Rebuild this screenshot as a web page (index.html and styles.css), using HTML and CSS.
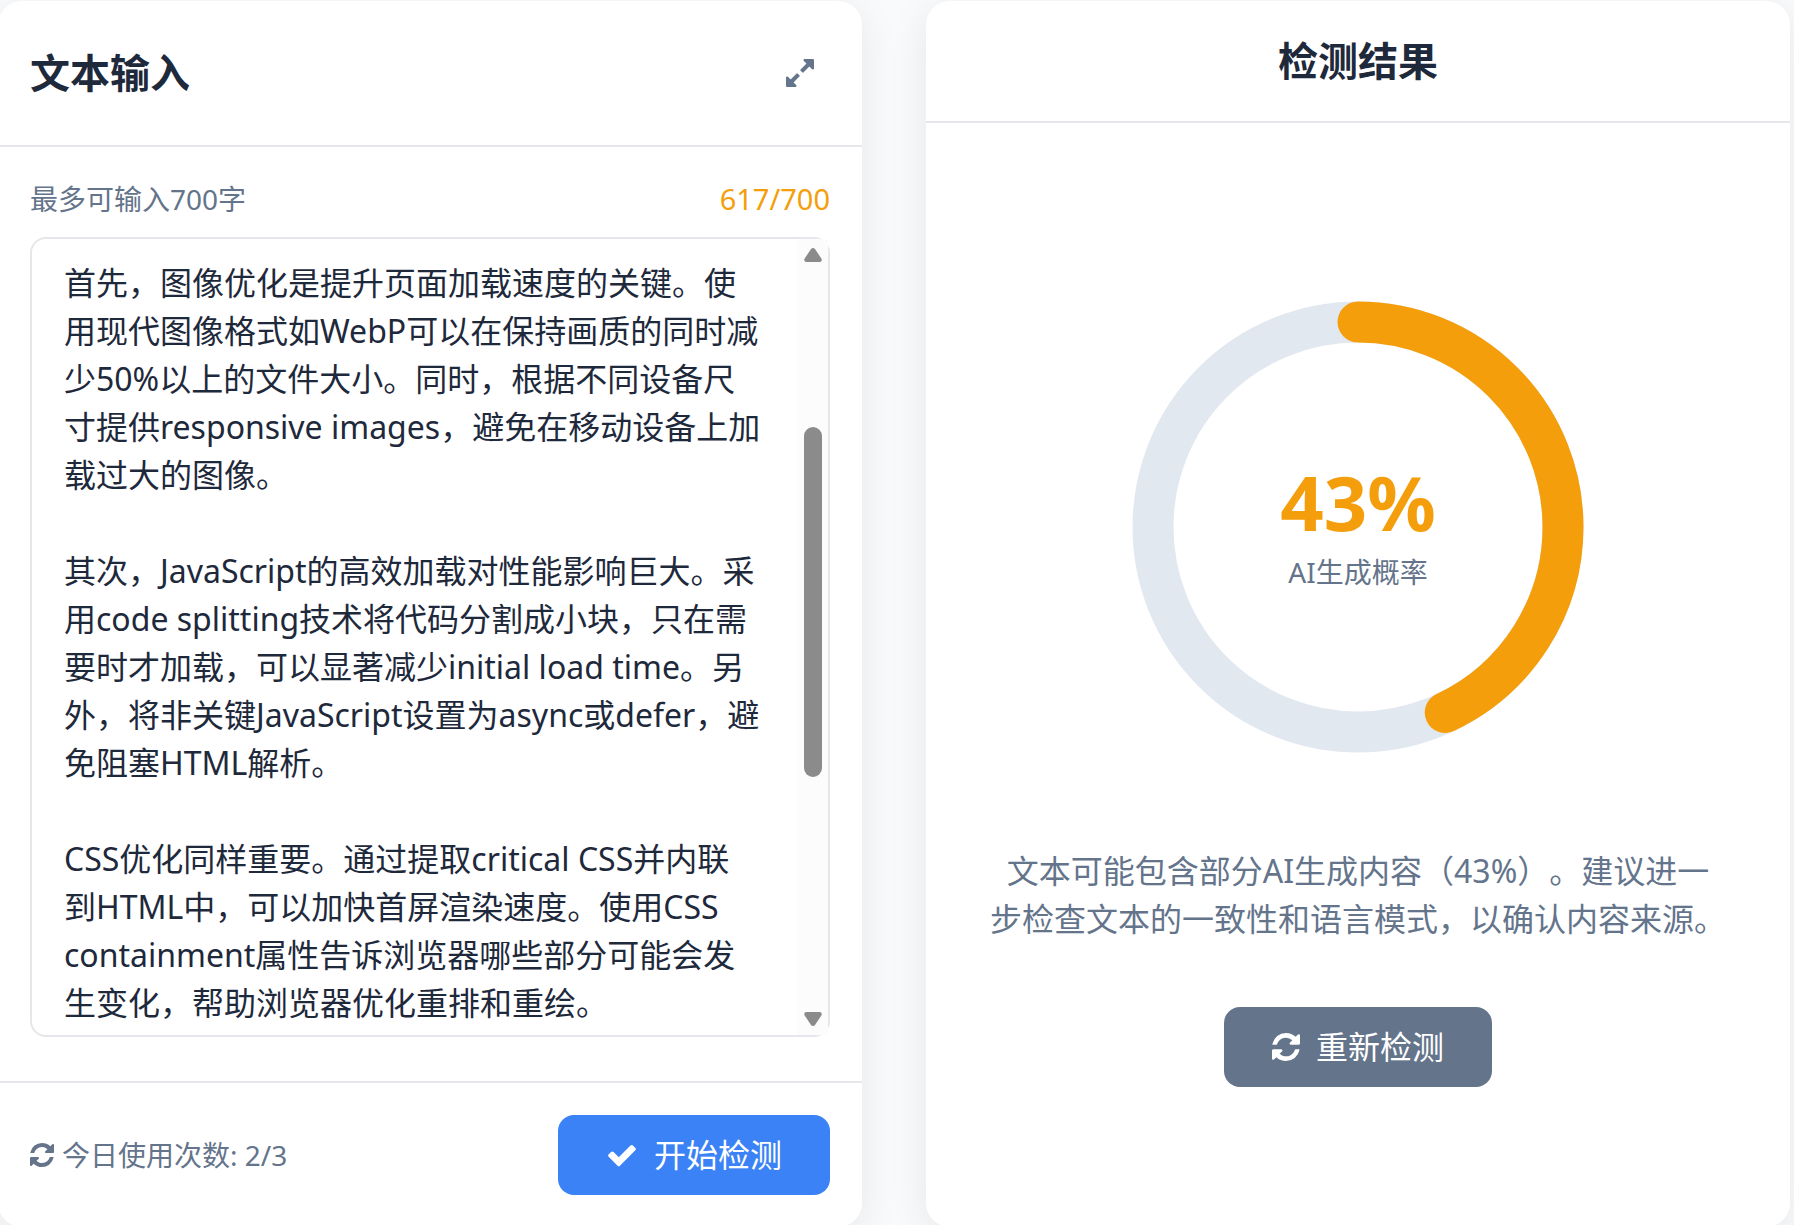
FILE: index.html
```
<!DOCTYPE html>
<html lang="zh-CN">
<head>
    <meta charset="UTF-8">
    <title>AI文本检测</title>
    <link rel="stylesheet" href="styles.css">
</head>
<body>
<svg class="sprite" aria-hidden="true">
    <symbol id="icon-refresh" viewBox="128 128 1536 1536">
        <path d="M1639 1056q0 5-1 7-64 268-268 434.500t-478 166.500q-146 0-282.500-55t-243.500-157l-129 129q-19 19-45 19t-45-19-19-45v-448q0-26 19-45t45-19h448q26 0 45 19t19 45-19 45l-137 137q71 66 161 102t187 36q134 0 250-65t186-179q11-17 53-117 8-23 30-23h192q13 0 22.500 9.500t9.500 22.500zm25-800v448q0 26-19 45t-45 19h-448q-26 0-45-19t-19-45 19-45l138-138q-148-137-349-137-134 0-250 65t-186 179q-11 17-53 117-8 23-30 23h-199q-13 0-22.500-9.500t-9.500-22.500v-7q65-268 270-434.500t480-166.500q146 0 284 55.500t245 156.500l130-129q19-19 45-19t45 19 19 45z"/>
    </symbol>
    <symbol id="icon-check" viewBox="0 0 1792 1792">
        <path d="M1671 566q0 40-28 68l-724 724-136 136q-28 28-68 28t-68-28l-136-136-362-362q-28-28-28-68t28-68l136-136q28-28 68-28t68 28l294 295 656-657q28-28 68-28t68 28l136 136q28 28 28 68z"/>
    </symbol>
    <symbol id="icon-expand" viewBox="128 128 1536 1536">
        <path d="M883 1056q0 13-10 23l-332 332 144 144q19 19 19 45t-19 45-45 19h-448q-26 0-45-19t-19-45v-448q0-26 19-45t45-19 45 19l144 144 332-332q10-10 23-10t23 10l114 114q10 10 10 23zm781-864v448q0 26-19 45t-45 19-45-19l-144-144-332 332q-10 10-23 10t-23-10l-114-114q-10-10-10-23t10-23l332-332-144-144q-19-19-19-45t19-45 45-19h448q26 0 45 19t19 45z"/>
    </symbol>
</svg>
<main class="container">
    <section class="card">
        <div class="card-header">
            <h2>文本输入</h2>
            <button class="expand-btn" type="button" aria-label="展开">
                <svg class="icon"><use href="#icon-expand"/></svg>
            </button>
        </div>
        <div class="input-body">
            <div class="input-info">
                <label for="text">最多可输入700字</label>
                <span class="count">617/700</span>
            </div>
            <div class="text-box">
                <textarea id="text" spellcheck="false">首先，图像优化是提升页面加载速度的关键。使用现代图像格式如WebP可以在保持画质的同时减少50%以上的文件大小。同时，根据不同设备尺寸提供responsive images，避免在移动设备上加载过大的图像。

其次，JavaScript的高效加载对性能影响巨大。采用code splitting技术将代码分割成小块，只在需要时才加载，可以显著减少initial load time。另外，将非关键JavaScript设置为async或defer，避免阻塞HTML解析。

CSS优化同样重要。通过提取critical CSS并内联
到HTML中，可以加快首屏渲染速度。使用CSS containment属性告诉浏览器哪些部分可能会发生变化，帮助浏览器优化重排和重绘。</textarea>
                <div class="scrollbar" aria-hidden="true">
                    <svg class="arrow" viewBox="0 0 18 14"><path d="M2 14h14q3-1 1-4L11 1q-2-2-4 0L1 10q-2 3 1 4z"/></svg>
                    <div class="thumb"></div>
                    <svg class="arrow" viewBox="0 0 18 14"><path d="M2 0h14q3 1 1 4l-6 9q-2 2-4 0L1 4q-2-3 1-4z"/></svg>
                </div>
            </div>
        </div>
        <div class="card-footer">
            <div class="usage">
                <svg class="icon icon-small"><use href="#icon-refresh"/></svg>
                <span>今日使用次数: 2/3</span>
            </div>
            <button class="btn btn-primary" type="button">
                <svg class="icon icon-check"><use href="#icon-check"/></svg>
                开始检测
            </button>
        </div>
    </section>
    <section class="card">
        <div class="card-header result-header">
            <h2>检测结果</h2>
        </div>
        <div class="result-body">
            <div class="chart">
                <svg class="ring" viewBox="0 0 480 480">
                    <circle class="ring-bg" cx="240" cy="240" r="205"/>
                    <circle class="ring-value" cx="240" cy="240" r="205" pathLength="100" stroke-dasharray="43 100"/>
                </svg>
                <div class="chart-text">
                    <strong>43%</strong>
                    <span>AI生成概率</span>
                </div>
            </div>
            <p class="result-text">文本可能包含部分AI生成内容（43%）。建议进一<br>步检查文本的一致性和语言模式，以确认内容来源。</p>
            <button class="btn btn-secondary" type="button">
                <svg class="icon"><use href="#icon-refresh"/></svg>
                重新检测
            </button>
        </div>
    </section>
</main>
</body>
</html>
```
FILE: styles.css
```
* {
    box-sizing: border-box;
}

html {
    overflow: hidden;
}

body, h2, p {
    margin: 0;
    padding: 0;
}

body, button, textarea {
    font-family: "Noto Sans", "Noto Sans CJK SC", sans-serif;
    text-spacing-trim: space-all;
}

body {
    background: #f8fafc;
    color: #1e293b;
}

.sprite {
    display: none;
}

.container {
    display: grid;
    grid-template-columns: 1fr 1fr;
    gap: 64px;
    margin: 1px 4px 0 -2px;
}

.card {
    display: flex;
    flex-direction: column;
    min-width: 0;
    background: #fff;
    border-radius: 24px;
    box-shadow: 0 8px 40px rgba(0, 0, 0, 0.08);
}

.card-header {
    display: flex;
    justify-content: space-between;
    align-items: center;
    padding: 32px;
    border-bottom: 2px solid #e5e7eb;
}

.card-header h2 {
    font-size: 40px;
    line-height: 56px;
    font-weight: 700;
}

.result-header {
    justify-content: center;
}

.icon {
    flex: none;
    width: 28px;
    height: 28px;
    fill: currentColor;
}

.icon-small {
    width: 24px;
    height: 24px;
}

.icon-check {
    width: 32px;
    height: 32px;
}

.expand-btn {
    display: flex;
    justify-content: center;
    align-items: center;
    width: 60px;
    height: 80px;
    padding: 0;
    border: none;
    background: none;
    color: #64748b;
}

/* 输入区 */
.input-body {
    padding: 32px 32px 44px;
}

.input-info {
    display: flex;
    justify-content: space-between;
    margin-bottom: 18px;
    font-size: 28px;
    line-height: 40px;
    color: #64748b;
}

.input-info .count {
    font-size: 29px;
    color: #f59e0b;
}

.text-box {
    display: flex;
    height: 800px;
    border: 2px solid #e5e7eb;
    border-radius: 16px;
}

.text-box textarea {
    flex: 1;
    min-width: 0;
    padding: 20px 32px 0;
    border: none;
    border-radius: 16px;
    outline: none;
    resize: none;
    overflow: hidden;
    background: none;
    color: #1e293b;
    font-size: 32px;
    line-height: 48px;
}

.scrollbar {
    display: flex;
    flex-direction: column;
    align-items: center;
    width: 30px;
    padding: 9px 0;
    background: #fcfcfc;
}

.scrollbar .arrow {
    width: 18px;
    height: 14px;
    fill: #8b8b8b;
}

.scrollbar .thumb {
    width: 18px;
    height: 350px;
    margin: 165px 0 auto;
    border-radius: 9px;
    background: #8b8b8b;
}

.card-footer {
    display: flex;
    justify-content: space-between;
    align-items: center;
    padding: 32px;
    border-top: 2px solid #e5e7eb;
}

.usage {
    display: flex;
    align-items: center;
    gap: 8px;
    font-size: 28px;
    line-height: 40px;
    color: #64748b;
}

.btn {
    display: flex;
    align-items: center;
    gap: 16px;
    height: 80px;
    padding: 0 48px;
    border: none;
    border-radius: 16px;
    color: #fff;
    font-size: 32px;
    line-height: 48px;
    white-space: nowrap;
}

.btn-primary {
    background: #3b82f6;
}

.btn-secondary {
    background: #64748b;
}

/* 结果区 */
.result-body {
    flex: 1;
    display: flex;
    flex-direction: column;
    justify-content: center;
    align-items: center;
}

.chart {
    display: grid;
    place-items: center;
    margin: 24px 0 80px;
}

.ring, .chart-text {
    grid-area: 1 / 1;
}

.ring {
    width: 480px;
    height: 480px;
    transform: rotate(-90deg);
}

.ring circle {
    fill: none;
    stroke-width: 41;
}

.ring-bg {
    stroke: #e2e8f0;
}

.ring .ring-value {
    stroke: #f59e0b;
    stroke-linecap: round;
}

.chart-text {
    display: flex;
    flex-direction: column;
    align-items: center;
    padding-bottom: 10px;
}

.chart-text strong {
    font-size: 76px;
    line-height: 100px;
    color: #f59e0b;
}

.chart-text span {
    font-size: 28px;
    line-height: 40px;
    color: #64748b;
}

.result-text {
    margin-bottom: 64px;
    font-size: 32px;
    line-height: 48px;
    text-align: center;
    color: #64748b;
}
```
